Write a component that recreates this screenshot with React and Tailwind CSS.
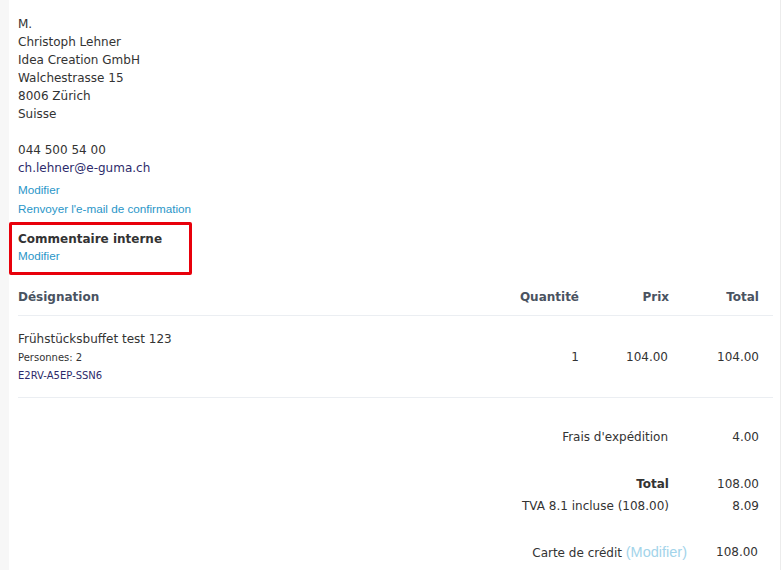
import React from "react";

export default function App() {
  const v = { fontFamily: "'DejaVu Sans', Verdana, sans-serif" };
  const a = { fontFamily: "'Liberation Sans', Arial, sans-serif" };
  return (
    <div className="w-[781px] h-[570px] overflow-hidden bg-white flex" style={v}>
      <div className="w-[9px] bg-[#f7f7f7] shrink-0" />
      <div className="flex-1 border-r border-[#ececec] pt-[15px] pl-[9px] pr-[7px] text-[12px] text-[#333] leading-[18px]">
        <div>M.</div>
        <div>Christoph Lehner</div>
        <div>Idea Creation GmbH</div>
        <div>Walchestrasse 15</div>
        <div>8006 Zürich</div>
        <div>Suisse</div>
        <div className="h-[18px]" />
        <div>044 500 54 00</div>
        <div className="text-[#2d2b6b]">ch.lehner@e-guma.ch</div>
        <div className="mt-[3px] text-[11.7px] leading-[19px] text-[#2a96c8]" style={a}>Modifier</div>
        <div className="text-[11.7px] leading-[19px] text-[#2a96c8]" style={a}>Renvoyer l'e-mail de confirmation</div>
        <div className="-ml-[9px] mt-[4px] w-[183px] h-[53px] border-[3px] border-[#e8000b] rounded-[2px] pl-[6px] pt-[5px]">
          <div className="font-bold text-[12px] leading-[18px]">Commentaire interne</div>
          <div className="text-[11.7px] leading-[16px] text-[#2a96c8]" style={a}>Modifier</div>
        </div>
        <div className="mt-[2px] flex items-center h-[39px] pt-[2px] border-b border-[#ebeef2] font-bold text-[#4a5361]">
          <div className="flex-1">Désignation</div>
          <div className="w-[120px] text-right">Quantité</div>
          <div className="w-[91px] text-right pr-[1px]">Prix</div>
          <div className="w-[89px] text-right pr-[14px] box-content">Total</div>
        </div>
        <div className="flex items-center h-[82px] border-b border-[#ebeef2]">
          <div className="flex-1 mt-[2px]">
            <div>Frühstücksbuffet test 123</div>
            <div className="text-[10px] leading-[18px] mt-[1px]">Personnes: 2</div>
            <div className="text-[10px] leading-[18px] text-[#2d2b6b]">E2RV-A5EP-SSN6</div>
          </div>
          <div className="w-[120px] text-right">1</div>
          <div className="w-[91px] text-right pr-[2px]">104.00</div>
          <div className="w-[89px] text-right pr-[14px] box-content">104.00</div>
        </div>
        <div className="flex mt-[30px]">
          <div className="flex-1 text-right pr-[2px]">Frais d'expédition</div>
          <div className="w-[89px] text-right pr-[14px] box-content">4.00</div>
        </div>
        <div className="flex mt-[29px]">
          <div className="flex-1 text-right font-bold pr-[1px]">Total</div>
          <div className="w-[89px] text-right pr-[14px] box-content">108.00</div>
        </div>
        <div className="flex mt-[4px]">
          <div className="flex-1 text-right pr-[1px]">TVA 8.1 incluse (108.00)</div>
          <div className="w-[89px] text-right pr-[14px] box-content">8.09</div>
        </div>
        <div className="flex mt-[28px]">
          <div className="flex-1 text-right pr-[1px]">
            Carte de crédit <span className="text-[14.5px] text-[#a3d4ea]" style={a}>(Modifier)</span>
          </div>
          <div className="w-[70px] text-right pr-[15px] box-content">108.00</div>
        </div>
      </div>
    </div>
  );
}
